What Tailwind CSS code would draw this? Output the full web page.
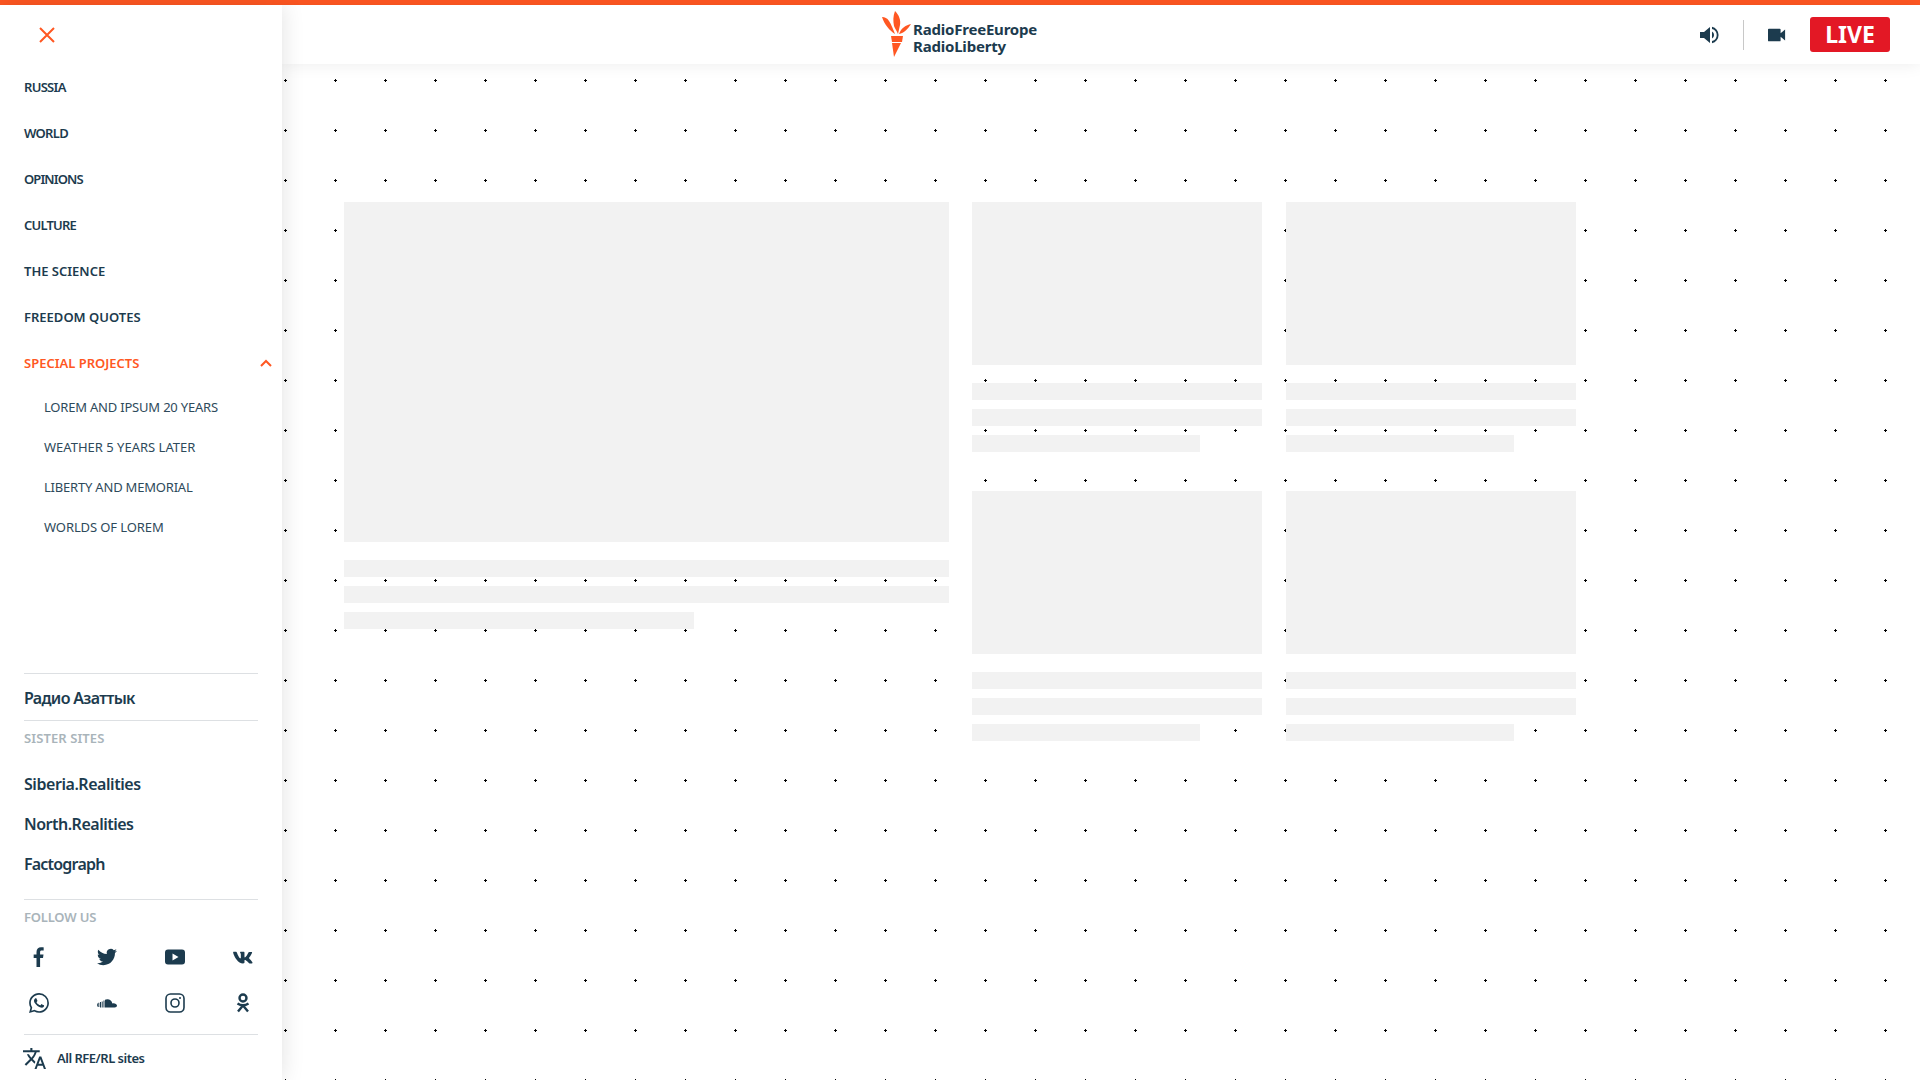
<!DOCTYPE html>
<html lang="en">
<head>
    <meta charset="UTF-8">
    <title>Radio Free Europe / Radio Liberty</title>
    <script src="https://cdn.jsdelivr.net/npm/@tailwindcss/browser@4"></script>
</head>
<body class="h-[1080px] overflow-hidden bg-white font-['Noto_Sans',sans-serif] text-[#1c3b4e]">
    <div class="h-[5px] bg-[#ff5722]"></div>
    <div class="flex h-[1075px]">
        <!-- sidebar -->
        <aside class="relative z-20 flex w-[282px] shrink-0 flex-col bg-white shadow-[0_0_22px_rgba(0,0,0,0.12)]">
            <button class="ml-[38px] mt-[21px] h-[18px] w-[18px] text-[#ff5722]">
                <svg viewBox="0 0 18 18" class="h-[18px] w-[18px]" fill="none" stroke="currentColor" stroke-width="2"><path d="M2 2l14 14M16 2L2 16"/></svg>
            </button>
            <nav class="mt-[20px] text-[13px] font-semibold leading-[46px]">
                <a class="block px-6 tracking-[-0.7px]">RUSSIA</a>
                <a class="block px-6 tracking-[-0.7px]">WORLD</a>
                <a class="block px-6 tracking-[-0.9px]">OPINIONS</a>
                <a class="block px-6 tracking-[-0.8px]">CULTURE</a>
                <a class="block px-6">THE SCIENCE</a>
                <a class="block px-6">FREEDOM QUOTES</a>
                <a class="flex items-center justify-between pl-6 pr-[10px] text-[#ff5722]">
                    SPECIAL PROJECTS
                    <svg viewBox="0 0 12 8" class="h-2 w-3" fill="none" stroke="currentColor" stroke-width="2"><path d="M1 7l5-5 5 5"/></svg>
                </a>
            </nav>
            <div class="mt-[1px] pl-[44px] text-[13px] leading-[40px] text-[#2e4a5b]">
                <a class="block tracking-[-0.2px]">LOREM AND IPSUM 20 YEARS</a>
                <a class="block">WEATHER 5 YEARS LATER</a>
                <a class="block tracking-[-0.2px]">LIBERTY AND MEMORIAL</a>
                <a class="block tracking-[-0.1px]">WORLDS OF LOREM</a>
            </div>
            <div class="mt-auto">
                <div class="mx-6 h-[47px] border-t border-[#dde0e3] text-[16px] font-semibold leading-[48px] tracking-[-0.65px]">Радио Азаттык</div>
                <div class="mx-6 border-t border-[#dde0e3] pt-[8px] text-[13px] font-semibold leading-[18px] tracking-[0.1px] text-[#a9b4ba]">SISTER SITES</div>
                <div class="mx-6 mt-[17px] text-[16px] font-semibold leading-[40px]">
                    <a class="block tracking-[-0.45px]">Siberia.Realities</a>
                    <a class="block tracking-[-0.5px]">North.Realities</a>
                    <a class="block tracking-[-0.8px]">Factograph</a>
                </div>
                <div class="mx-6 mt-[15px] border-t border-[#dde0e3] pt-[8px] text-[13px] font-semibold leading-[18px] tracking-[-0.2px] text-[#a9b4ba]">FOLLOW US</div>
                <div class="ml-[5px] mt-[21px] grid w-[272px] grid-cols-4 items-center justify-items-center gap-y-[26px]">
                    <svg viewBox="0 0 24 24" class="h-5 w-5" fill="currentColor"><path d="M9 24V13.300H5.600V9.100H9V6c0-3.600 2.200-5.600 5.400-5.600 1.500 0 2.900.1 3.200.2v3.700h-2.200c-1.700 0-2.100.8-2.100 2v2.800h4.100l-.6 4.200h-3.500V24z"/></svg>
                    <svg viewBox="0 0 24 24" class="h-5 w-5" fill="currentColor"><path d="M23.953 4.57a10 10 0 01-2.825.775 4.958 4.958 0 002.163-2.723c-.951.555-2.005.959-3.127 1.184a4.92 4.92 0 00-8.384 4.482C7.69 8.095 4.067 6.13 1.64 3.162a4.822 4.822 0 00-.666 2.475c0 1.71.87 3.213 2.188 4.096a4.904 4.904 0 01-2.228-.616v.06a4.923 4.923 0 003.946 4.827 4.996 4.996 0 01-2.212.085 4.936 4.936 0 004.604 3.417 9.867 9.867 0 01-6.102 2.105c-.39 0-.779-.023-1.17-.067a13.995 13.995 0 007.557 2.209c9.053 0 13.998-7.496 13.998-13.985 0-.21 0-.42-.015-.63A9.935 9.935 0 0024 4.59z"/></svg>
                    <svg viewBox="0 0 20 20" class="h-5 w-5" fill="currentColor"><path fill-rule="evenodd" d="M3 2.500h14a3 3 0 013 3v9a3 3 0 01-3 3H3a3 3 0 01-3-3v-9a3 3 0 013-3zM7.500 6.500v7l6-3.500z"/></svg>
                    <svg viewBox="3.900 7 16.500 10.500" class="h-[13px] w-5" fill="currentColor"><path d="M19.376 17.123h-1.744c-.66 0-.864-.525-2.05-1.727-1.033-1-1.49-1.135-1.744-1.135-.356 0-.458.102-.458.593v1.575c0 .424-.135.678-1.253.678-1.846 0-3.896-1.118-5.335-3.202C4.624 10.857 4.03 8.57 4.03 8.096c0-.254.102-.491.593-.491h1.744c.44 0 .61.203.78.677.863 2.49 2.303 4.675 2.896 4.675.22 0 .322-.102.322-.66V9.721c-.068-1.186-.695-1.287-.695-1.71 0-.204.17-.407.44-.407h2.744c.373 0 .508.203.508.643v3.473c0 .372.17.508.271.508.22 0 .407-.136.813-.542 1.254-1.406 2.151-3.574 2.151-3.574.119-.254.322-.491.763-.491h1.744c.525 0 .644.27.525.643-.22 1.017-2.354 4.031-2.354 4.031-.186.305-.254.44 0 .78.186.254.796.779 1.203 1.253.745.847 1.32 1.558 1.473 2.05.17.49-.085.744-.576.744z"/></svg>
                    <svg viewBox="0 0 24 24" class="h-5 w-5" fill="currentColor"><path d="M17.472 14.382c-.297-.149-1.758-.867-2.03-.967-.273-.099-.471-.148-.67.15-.197.297-.767.966-.94 1.164-.173.199-.347.223-.644.075-.297-.15-1.255-.463-2.39-1.475-.883-.788-1.48-1.761-1.653-2.059-.173-.297-.018-.458.13-.606.134-.133.298-.347.446-.52.149-.174.198-.298.298-.497.099-.198.05-.371-.025-.52-.075-.149-.669-1.612-.916-2.207-.242-.579-.487-.5-.669-.51-.173-.008-.371-.01-.57-.01-.198 0-.52.074-.792.372-.272.297-1.04 1.016-1.04 2.479 0 1.462 1.065 2.875 1.213 3.074.149.198 2.096 3.2 5.077 4.487.709.306 1.262.489 1.694.625.712.227 1.36.195 1.871.118.571-.085 1.758-.719 2.006-1.413.248-.694.248-1.289.173-1.413-.074-.124-.272-.198-.57-.347m-5.421 7.403h-.004a9.87 9.87 0 01-5.031-1.378l-.361-.214-3.741.982.998-3.648-.235-.374a9.86 9.86 0 01-1.51-5.26c.001-5.45 4.436-9.884 9.888-9.884 2.64 0 5.122 1.03 6.988 2.898a9.825 9.825 0 012.893 6.994c-.003 5.45-4.437 9.884-9.885 9.884m8.413-18.297A11.815 11.815 0 0012.05 0C5.495 0 .16 5.335.157 11.892c0 2.096.547 4.142 1.588 5.945L.057 24l6.305-1.654a11.882 11.882 0 005.683 1.448h.005c6.554 0 11.89-5.335 11.893-11.893a11.821 11.821 0 00-3.48-8.413z"/></svg>
                    <svg viewBox="0 0 20 20" class="h-5 w-5" fill="currentColor"><path d="M8 14.500V6.800a5 5 0 0 1 2.300-.5c2.700 0 4.700 1.800 5 4.100 2.200-.6 4.700.7 4.700 2.200 0 1.200-1 1.900-2.300 1.900zM6.500 14.500v-7h1v7zM4.700 14.500v-6h1v6zM3 14.500V9h1v5.500zM1.300 14V9.800h1V14zM0 13.500v-3h.8v3z"/></svg>
                    <svg viewBox="0 0 20 20" class="h-5 w-5" fill="none" stroke="currentColor" stroke-width="1.600"><rect x="1" y="1" width="18" height="18" rx="4.500"/><circle cx="10" cy="10" r="4"/><circle cx="15" cy="5" r="1" fill="currentColor" stroke="none"/></svg>
                    <svg viewBox="0 0 20 20" class="h-5 w-5" fill="none" stroke="currentColor" stroke-width="2.400"><circle cx="10" cy="5" r="3.500"/><path d="M4.500 10.500c3.500 2.300 7.500 2.300 11 0M10 12.500L5 18.500M10 12.500l5 6"/></svg>
                </div>
                <div class="mx-6 mt-[21px] flex h-[46px] items-center gap-[11px] border-t border-[#dde0e3] pt-[2px] text-[13px] font-semibold tracking-[-0.5px]">
                    <svg viewBox="1 2 22 20" class="-ml-[1px] h-[21px] w-[23px]" fill="currentColor"><path d="M12.870 15.070l-2.540-2.510.03-.03c1.740-1.940 2.980-4.170 3.710-6.530H17V4h-7V2H8v2H1v1.990h11.170C11.500 7.920 10.440 9.750 9 11.350 8.070 10.320 7.300 9.190 6.690 8h-2c.73 1.630 1.730 3.170 2.980 4.560l-5.090 5.020L4 19l5-5 3.110 3.110.76-2.040zM18.500 10h-2L12 22h2l1.120-3h4.750L21 22h2l-4.500-12zm-2.620 7l1.620-4.330L19.120 17h-3.240z"/></svg>
                    All RFE/RL sites
                </div>
            </div>
        </aside>

        <div class="relative flex min-w-0 flex-1 flex-col">
            <!-- dot background -->
            <svg class="absolute inset-0 h-full w-full" aria-hidden="true">
                <defs>
                    <pattern id="dots" x="-48" y="24" width="50" height="50" patternUnits="userSpaceOnUse">
                        <path d="M0 1h3v1H0zM1 0h1v3H1z" fill="#000"/>
                    </pattern>
                </defs>
                <rect width="100%" height="100%" fill="url(#dots)"/>
            </svg>

            <!-- header -->
            <header class="relative z-10 flex h-[59px] shrink-0 items-center bg-white shadow-[0_0_16px_rgba(0,0,0,0.08)]">
                <div class="ml-[600px] flex items-center">
                    <svg viewBox="0 0 30 46" class="-mt-[2px] h-[46px] w-[30px]">
                        <g fill="#ff5722">
                            <path d="M13 0c4 4 6 9 5 14l-2 9c-1-3-3-5-4-8-1-5-1-10 1-15z"/>
                            <path d="M0 6c3 0 5 1 7 4 2 3 4 8 6 13C8 20 2 13 0 6z"/>
                            <path d="M29 13c-5 1-10 4-12 10 5-1 9-5 12-10z"/>
                            <path d="M9 25h12l-1 6H10z"/>
                            <path d="M10 32h9l-7 14z"/>
                        </g>
                    </svg>
                    <div class="ml-[1px] mt-[7px] text-[15px] font-bold leading-[17px] tracking-[-0.2px] text-[#1c3b4e]">RadioFreeEurope<br>RadioLiberty</div>
                </div>
                <div class="ml-auto flex items-center pr-[30px]">
                    <svg viewBox="0 0 20 20" class="h-[20px] w-[20px]" fill="#1c3b4e"><path d="M0 7v6h4l6 5V2L4 7z"/><path d="M12 6.500a4 4 0 010 7z"/><path d="M12 1.800v2.100a6.300 6.300 0 010 12.200v2.100a8.400 8.400 0 000-16.400z"/></svg>
                    <div class="ml-[23px] h-[30px] w-px bg-[#c8c8c8]"></div>
                    <svg viewBox="0 0 20 14" class="ml-[24px] h-[14px] w-[18px]" fill="#1c3b4e"><path d="M1 0h12a1 1 0 011 1v4l5-4v12l-5-4v4a1 1 0 01-1 1H1a1 1 0 01-1-1V1a1 1 0 011-1z"/></svg>
                    <div class="ml-[24px] flex h-[35px] w-[80px] items-center justify-center rounded-[3px] bg-[#e31825] text-[23px] font-bold text-white">LIVE</div>
                </div>
            </header>

            <!-- loading placeholders -->
            <main class="relative flex gap-[23px] pl-[62px] pt-[138px]">
                <div class="w-[605px]">
                    <div class="h-[340px] bg-[#f2f2f2]"></div>
                    <div class="mt-[18px] flex flex-col gap-[9px]">
                        <div class="h-[17px] bg-[#f2f2f2]"></div>
                        <div class="h-[17px] bg-[#f2f2f2]"></div>
                        <div class="h-[17px] w-[350px] bg-[#f2f2f2]"></div>
                    </div>
                </div>
                <div class="grid w-[604px] grid-cols-2 content-start gap-x-[24px] gap-y-[39px]">
                    <div>
                        <div class="h-[163px] bg-[#f2f2f2]"></div>
                        <div class="mt-[18px] flex flex-col gap-[9px]">
                            <div class="h-[17px] bg-[#f2f2f2]"></div>
                            <div class="h-[17px] bg-[#f2f2f2]"></div>
                            <div class="h-[17px] w-[228px] bg-[#f2f2f2]"></div>
                        </div>
                    </div>
                    <div>
                        <div class="h-[163px] bg-[#f2f2f2]"></div>
                        <div class="mt-[18px] flex flex-col gap-[9px]">
                            <div class="h-[17px] bg-[#f2f2f2]"></div>
                            <div class="h-[17px] bg-[#f2f2f2]"></div>
                            <div class="h-[17px] w-[228px] bg-[#f2f2f2]"></div>
                        </div>
                    </div>
                    <div>
                        <div class="h-[163px] bg-[#f2f2f2]"></div>
                        <div class="mt-[18px] flex flex-col gap-[9px]">
                            <div class="h-[17px] bg-[#f2f2f2]"></div>
                            <div class="h-[17px] bg-[#f2f2f2]"></div>
                            <div class="h-[17px] w-[228px] bg-[#f2f2f2]"></div>
                        </div>
                    </div>
                    <div>
                        <div class="h-[163px] bg-[#f2f2f2]"></div>
                        <div class="mt-[18px] flex flex-col gap-[9px]">
                            <div class="h-[17px] bg-[#f2f2f2]"></div>
                            <div class="h-[17px] bg-[#f2f2f2]"></div>
                            <div class="h-[17px] w-[228px] bg-[#f2f2f2]"></div>
                        </div>
                    </div>
                </div>
            </main>
        </div>
    </div>
</body>
</html>
